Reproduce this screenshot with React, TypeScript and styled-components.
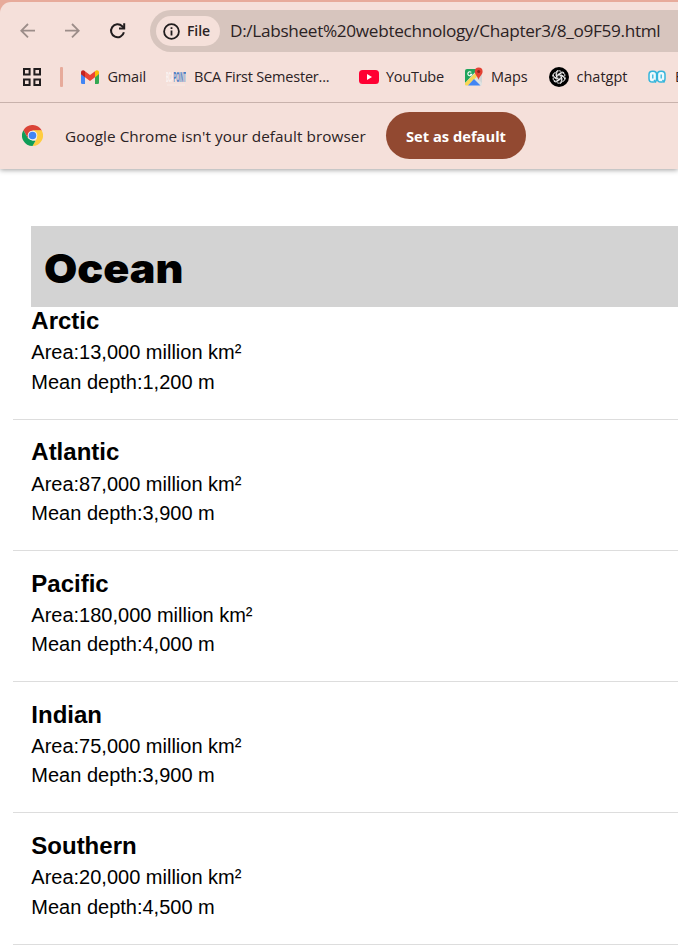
import React from "react";
import styled, { createGlobalStyle } from "styled-components";

const GlobalStyle = createGlobalStyle`
  * { box-sizing: border-box; }
  body { margin: 0; background: #fff; overflow: hidden; }
`;

const Window = styled.div`
  width: 678px;
  height: 947px;
  overflow: hidden;
  background: #fff;
  font-family: "Liberation Sans", Arial, sans-serif;
`;

const Chrome = styled.header`
  height: 169px;
  background: #e7ab9b;
  padding-top: 2px;
  color: #2b2224;
  font-family: "Open Sans", "Noto Sans", sans-serif;
  white-space: nowrap;
  box-shadow: 0 1px 5px rgba(0, 0, 0, 0.38);
  svg { display: block; flex: none; }
`;

const ChromeBody = styled.div`
  height: 167px;
  background: #f5e0da;
  border-top-left-radius: 11px;
`;

const Toolbar = styled.div`
  height: 58px;
  display: flex;
  align-items: center;
  padding-left: 19px;
`;

const NavButton = styled.button<{ $gap: number }>`
  border: 0;
  padding: 0;
  background: none;
  display: flex;
  margin-right: ${(p) => p.$gap}px;
`;

const AddressBar = styled.div`
  flex: 1;
  height: 42px;
  border-radius: 21px 0 0 21px;
  background: #d7c5be;
  display: flex;
  align-items: center;
  padding-left: 6px;
`;

const FileChip = styled.div`
  width: 64px;
  height: 30px;
  border-radius: 15px;
  background: #f5e0da;
  display: flex;
  align-items: center;
  gap: 7px;
  padding-left: 7px;
  margin-right: 10px;
`;

const Label = styled.span<{ $size: number; $spacing?: number; $weight?: number }>`
  font-size: ${(p) => p.$size}px;
  letter-spacing: ${(p) => p.$spacing ?? 0}px;
  font-weight: ${(p) => p.$weight ?? 400};
  line-height: 22px;
`;

const BookmarksBar = styled.nav`
  height: 43px;
  display: flex;
  align-items: flex-start;
  border-bottom: 1px solid #c8b2ac;
  padding: 6px 0 0 23px;
  overflow: hidden;
`;

const Divider = styled.i`
  flex: none;
  width: 3px;
  height: 20px;
  margin: 1px 18px 0 19px;
  border-radius: 1px;
  background: #e7ab9b;
`;

const Bookmark = styled.a<{ $width: number; $gap: number }>`
  flex: none;
  width: ${(p) => p.$width}px;
  height: 22px;
  display: flex;
  align-items: center;
  gap: ${(p) => p.$gap}px;
`;

const InfoBar = styled.div`
  height: 64px;
  display: flex;
  align-items: center;
  padding-left: 22px;
`;

const Message = styled(Label)`
  width: 300px;
  margin: 2px 21px 0 22px;
`;

const DefaultButton = styled.button`
  width: 140px;
  height: 47px;
  margin-top: 1px;
  padding: 0;
  border: 0;
  border-radius: 24px;
  background: #924931;
  color: #fff;
  font-family: inherit;
`;

const Page = styled.main`
  padding: 57px 0 0 13px;
  color: #000;
`;

const Banner = styled.div`
  height: 81px;
  margin-left: 18px;
  padding: 4px 0 0 13px;
  background: #d3d3d3;
  display: flex;
  align-items: center;
`;

const Title = styled.h1`
  margin: 0;
  font-family: Inter, "Liberation Sans", sans-serif;
  font-weight: 900;
  font-size: 40px;
  line-height: 56px;
  transform: scaleX(1.075);
  transform-origin: left;
`;

const OceanItem = styled.section`
  height: 131.25px;
  padding: 18.75px 0 0 18.3px;
  border-bottom: 1px solid #ddd;
  &:first-of-type { height: 112.6px; padding-top: 0; }
`;

const OceanName = styled.h2`
  margin: 0;
  font-size: 24px;
  line-height: 28px;
  padding-bottom: 3.2px;
`;

const Fact = styled.p`
  margin: 0;
  font-size: 20px;
  line-height: 29.4px;
`;

const BackIcon = () => (
  <svg width="18" height="18" viewBox="0 0 18 18" fill="none" stroke="#9c8d89" strokeWidth="1.8">
    <path d="M16 8.7H2.5M9 2 2.3 8.7 9 15.4" />
  </svg>
);
const ForwardIcon = () => (
  <svg width="18" height="18" viewBox="0 0 18 18" fill="none" stroke="#9c8d89" strokeWidth="1.8">
    <path d="M1 8.7h13.5M8 2l6.7 6.7L8 15.4" />
  </svg>
);
const ReloadIcon = () => (
  <svg width="18" height="18" viewBox="0 0 18 18" fill="none" stroke="#211d1e" strokeWidth="2">
    <path d="M14.9 10.2A6.5 6.5 0 1 1 13.200 4.200L15 6" />
    <path d="M15.200 1.200v5.200H10" />
  </svg>
);
const InfoIcon = () => (
  <svg width="17" height="17" viewBox="0 0 17 17" fill="none" stroke="#211d1e">
    <circle cx="8.5" cy="8.5" r="7.4" strokeWidth="1.8" />
    <path d="M8.5 7.6v5M8.5 4.3v1.8" strokeWidth="1.8" />
  </svg>
);
const AppsIcon = () => (
  <svg width="18" height="18" viewBox="0 0 18 18" fill="none" stroke="#211d1e" strokeWidth="2">
    <path d="M1 1h5.6v5.6H1zM11.4 1H17v5.6h-5.6zM1 11.4h5.6V17H1zM11.4 11.4H17V17h-5.6z" />
  </svg>
);
const GmailIcon = () => (
  <svg width="18" height="14" viewBox="0 0 18 14">
    <path fill="#4285f4" d="M0 2.3 4 5v9H1.3A1.3 1.3 0 0 1 0 12.7z" />
    <path fill="#34a853" d="M14 5l4-2.7v10.4a1.3 1.3 0 0 1-1.3 1.3H14z" />
    <path fill="#fbbc04" d="M14 1.2c1.4-1.8 4-1.1 4 1.1V4l-4 3.4z" />
    <path fill="#ea4335" d="M4 1.2 9 5l5-3.8v6L9 11 4 7.2z" />
    <path fill="#c5221f" d="M0 2.3C0 .1 2.6-.6 4 1.2v6L0 4.2z" />
  </svg>
);
const PointIcon = () => (
  <svg width="20" height="20" viewBox="0 0 20 20">
    <g fontFamily="Liberation Sans" fontWeight="700">
      <text transform="translate(0 15) scale(.24 1)" fontSize="15" fill="#fff" opacity=".65">BCA</text>
      <text transform="translate(7.5 15) scale(.27 1)" fontSize="15" fill="#477bc5">POINT</text>
    </g>
    <path d="M1 18h18" stroke="#fff" opacity=".35" />
  </svg>
);
const YouTubeIcon = () => (
  <svg width="20" height="14" viewBox="0 0 20 14">
    <rect width="20" height="14" rx="3.5" fill="#ff0033" />
    <path d="M8 4.1v5.8L13 7z" fill="#fff" />
  </svg>
);
const MapsIcon = () => (
  <svg width="20" height="20" viewBox="0 0 20 20">
    <rect x="1" y="2" width="17" height="16.5" rx="1.5" fill="#dfe3e2" />
    <path d="M1 4a2 2 0 0 1 2-2h11L1 16z" fill="#1fa45b" />
    <path d="M1 16 13.5 4l2.5 2.5L4 18.5H2a1 1 0 0 1-1-1z" fill="#f8d655" />
    <path d="M4 18.5 10 12l6.5 6.5z" fill="#4285f4" />
    <path d="M12 10l6 6V7z" fill="#d3d6d6" />
    <path d="M7.3 5.4A2 2 0 1 0 7.8 7.2H6" fill="none" stroke="#fff" strokeWidth="1.1" />
    <path d="M14.5 13C14 9.5 10.8 8 10.8 4.5a3.9 3.9 0 0 1 7.8 0C18.6 8 15 9.5 14.5 13z" fill="#e34133" />
    <circle cx="14.7" cy="4.4" r="1.5" fill="#8c251c" />
  </svg>
);
const ChatIcon = () => (
  <svg width="20" height="20" viewBox="0 0 20 20">
    <circle cx="10" cy="10" r="10" fill="#000" />
    <g fill="none" stroke="#fff" strokeWidth=".85">
      {[0, 60, 120, 180, 240, 300].map((a) => (
        <path key={a} transform={`rotate(${a} 10 10)`} d="M7.7 11.3V6.2a2.6 2.6 0 0 1 4.6-1.5M9.2 9.2V7.1l3-1.7a2.5 2.5 0 0 1 3 .4" />
      ))}
    </g>
  </svg>
);
const EyesIcon = () => (
  <svg width="18" height="14" viewBox="0 0 18 14" stroke="#35b5db" strokeWidth="1.5">
    <rect x="1" y="1.3" width="7.6" height="10.8" rx="3.3" fill="#eefafd" />
    <rect x="9.4" y="1.3" width="7.6" height="10.8" rx="3.3" fill="#eefafd" />
    <path d="M4.8 4.5v4M13.2 4.5v4M6 10l2 2.5M14.5 10l2 2.5" fill="none" strokeWidth="1.3" />
  </svg>
);
const ChromeIcon = () => (
  <svg width="21" height="21" viewBox="0 0 48 48">
    <path fill="#db4437" d="M3.2 12A24 24 0 0 1 44.8 12L45 13H24L13.6 30z" />
    <path fill="#ffcd40" d="M44.8 12A24 24 0 0 1 24 48L34.4 30 24 12z" />
    <path fill="#0f9d58" d="M24 48A24 24 0 0 1 3.2 12L13.6 30 24 36h7z" />
    <circle cx="24" cy="24" r="11" fill="#f1f1f1" />
    <circle cx="24" cy="24" r="8.6" fill="#4285f4" />
  </svg>
);

const bookmarks = [
  { name: "Gmail", icon: <GmailIcon />, width: 85, gap: 8.5, spacing: -0.2 },
  { name: "BCA First Semester...", icon: <PointIcon />, width: 193, gap: 8, spacing: -0.2 },
  { name: "YouTube", icon: <YouTubeIcon />, width: 105, gap: 7, spacing: -0.25 },
  { name: "Maps", icon: <MapsIcon />, width: 85, gap: 7, spacing: -0.1 },
  { name: "chatgpt", icon: <ChatIcon />, width: 99, gap: 7.5, spacing: 0 },
  { name: "E", icon: <EyesIcon />, width: 60, gap: 9, spacing: 0 },
];

const oceans = [
  { name: "Arctic", area: "13,000", depth: "1,200" },
  { name: "Atlantic", area: "87,000", depth: "3,900" },
  { name: "Pacific", area: "180,000", depth: "4,000" },
  { name: "Indian", area: "75,000", depth: "3,900" },
  { name: "Southern", area: "20,000", depth: "4,500" },
];

export default function App() {
  return (
    <Window>
      <GlobalStyle />
      <Chrome>
        <ChromeBody>
          <Toolbar>
            <NavButton $gap={27}><BackIcon /></NavButton>
            <NavButton $gap={27}><ForwardIcon /></NavButton>
            <NavButton $gap={23}><ReloadIcon /></NavButton>
            <AddressBar>
              <FileChip>
                <InfoIcon />
                <Label $size={14} $weight={600} $spacing={-0.1}>File</Label>
              </FileChip>
              <Label $size={17.2} $spacing={-0.32}>D:/Labsheet%20webtechnology/Chapter3/8_o9F59.html</Label>
            </AddressBar>
          </Toolbar>
          <BookmarksBar>
            <Bookmark $width={18} $gap={0}><AppsIcon /></Bookmark>
            <Divider />
            {bookmarks.map((b) => (
              <Bookmark key={b.name} $width={b.width} $gap={b.gap}>
                {b.icon}
                <Label $size={14.5} $spacing={b.spacing}>{b.name}</Label>
              </Bookmark>
            ))}
          </BookmarksBar>
          <InfoBar>
            <ChromeIcon />
            <Message $size={15.3} $spacing={0.06}>Google Chrome isn't your default browser</Message>
            <DefaultButton><Label $size={14.7} $weight={700}>Set as default</Label></DefaultButton>
          </InfoBar>
        </ChromeBody>
      </Chrome>
      <Page>
        <Banner><Title>Ocean</Title></Banner>
        {oceans.map((o) => (
          <OceanItem key={o.name}>
            <OceanName>{o.name}</OceanName>
            <Fact>Area:{o.area} million km²</Fact>
            <Fact>Mean depth:{o.depth} m</Fact>
          </OceanItem>
        ))}
      </Page>
    </Window>
  );
}
